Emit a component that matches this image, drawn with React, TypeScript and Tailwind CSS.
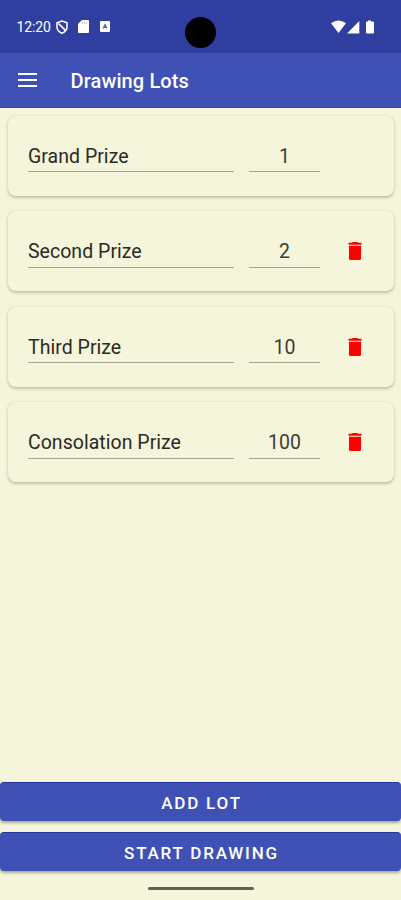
import React from "react";

type Lot = { name: string; count: number; removable: boolean };

const lots: Lot[] = [
  { name: "Grand Prize", count: 1, removable: false },
  { name: "Second Prize", count: 2, removable: true },
  { name: "Third Prize", count: 10, removable: true },
  { name: "Consolation Prize", count: 100, removable: true },
];

function StatusBar() {
  return (
    <div className="relative flex h-[53px] shrink-0 items-center bg-[#303f9f] pl-[16.500px] pr-[26px] text-white">
      <span className="w-[35.500px] whitespace-nowrap text-[14px] leading-[16px] tracking-[-0.1px]">12:20</span>
      <svg className="ml-[4px] h-[14px] w-[12px]" viewBox="0 0 12 14" fill="none" stroke="currentColor">
        <path d="M6 1 11 2.800V7c0 2.800-2 5-5 6.200C3 12 1 9.800 1 7V2.800Z" strokeWidth="1.500" />
        <path d="M2.500 3.500 9.500 10.300" strokeWidth="1.700" />
      </svg>
      <svg className="ml-[10px] h-[13px] w-[11px]" viewBox="0 0 11 13" fill="currentColor">
        <path d="M4 0H10Q11 0 11 1V12Q11 13 10 13H1Q0 13 0 12V4Z" />
        <path d="M4.200 1.800V4M6.300 1.800V4M8.400 1.800V4" stroke="#b5bbdf" strokeWidth="0.900" />
      </svg>
      <svg className="ml-[11px] h-[11px] w-[10px]" viewBox="0 0 10 11">
        <rect width="10" height="11" rx="1" fill="white" />
        <path d="M3.200 7.500 5 3.500 6.800 7.500M3.900 6.400H6.100" fill="none" stroke="#4a57aa" strokeWidth="1.100" />
      </svg>
      <div className="absolute left-[185px] top-[17px] h-[31px] w-[31px] rounded-full bg-black" />
      <svg className="ml-auto h-[14px] w-[44px]" viewBox="0 0 44 14" fill="currentColor">
        <path d="M0 3.200Q7.500-2.400 15 3.200L7.500 13Z" />
        <path d="M28.300 1V13.500H16Z" />
        <path d="M37 0.500H40V1.600H42Q43 1.600 43 2.600V12.500Q43 13.500 42 13.500H36Q35 13.500 35 12.500V2.600Q35 1.600 36 1.600H37Z" />
      </svg>
    </div>
  );
}

function AppBar() {
  return (
    <header className="flex h-[54.500px] shrink-0 items-center border-b border-[#3243a5] bg-[#3f51b5] pl-[18px] text-white">
      <button aria-label="Menu" className="flex w-[19px] flex-col gap-[4px]">
        <span className="h-[2px] w-full bg-white" />
        <span className="h-[2px] w-full bg-white" />
        <span className="h-[2px] w-full bg-white" />
      </button>
      <h1 className="ml-[33.500px] mt-[3px] text-[20px] font-medium leading-[24px] tracking-[0.12px]">Drawing Lots</h1>
    </header>
  );
}

function TrashIcon() {
  return (
    <svg className="h-[18px] w-[14px]" viewBox="0 0 14 18" fill="#ff0000">
      <path d="M0.500 0.800H4L4.500 0H9.500L10 0.800H13.500V2.800H0.500Z" />
      <path d="M1 3.800H13V16.500Q13 18 11.500 18H2.500Q1 18 1 16.500Z" />
    </svg>
  );
}

function LotCard({ lot }: { lot: Lot }) {
  return (
    <div className="flex h-[80px] items-start rounded-[8px] bg-[#f5f5dc] pl-[20px] pt-[28px] shadow-[0_1.5px_3px_rgba(70,70,40,0.28),0_0_2px_rgba(70,70,40,0.08)]">
      <div className="h-[28.500px] w-[206px] border-b border-[#a3a38f] pt-px text-[19.500px] leading-[24px] tracking-[0.03px] text-[#2a2a24]">
        {lot.name}
      </div>
      <div className="ml-[15px] h-[28.500px] w-[71px] border-b border-[#a3a38f] pt-px text-center text-[19.500px] leading-[24px] text-[#3c3c35]">
        {lot.count}
      </div>
      {lot.removable && (
        <button aria-label="Delete" className="ml-[28px] mt-[3.400px]">
          <TrashIcon />
        </button>
      )}
    </div>
  );
}

function ActionButton({ children }: { children: React.ReactNode }) {
  return (
    <button className="flex h-[39px] w-full items-center justify-center rounded-[4px] border-t border-[#24379b] bg-[#3f51b5] pl-[2px] pt-px text-[17px] font-medium leading-[20px] tracking-[1.8px] text-white shadow-[0_2px_3px_rgba(60,60,40,0.4)]">
      {children}
    </button>
  );
}

export default function App() {
  return (
    <div className="flex h-[900px] w-[401px] flex-col overflow-hidden bg-[#f5f5dc] font-[Roboto,sans-serif]">
      <StatusBar />
      <AppBar />
      <main className="flex flex-1 flex-col gap-[15.500px] pl-[8px] pr-[7px] pt-[8px]">
        {lots.map((lot) => (
          <LotCard key={lot.name} lot={lot} />
        ))}
      </main>
      <footer className="flex flex-col items-center gap-[11px]">
        <ActionButton>ADD LOT</ActionButton>
        <ActionButton>START DRAWING</ActionButton>
        <div className="mb-[10px] mt-[5px] h-[3px] w-[106px] rounded-full bg-[#61614f]" />
      </footer>
    </div>
  );
}
